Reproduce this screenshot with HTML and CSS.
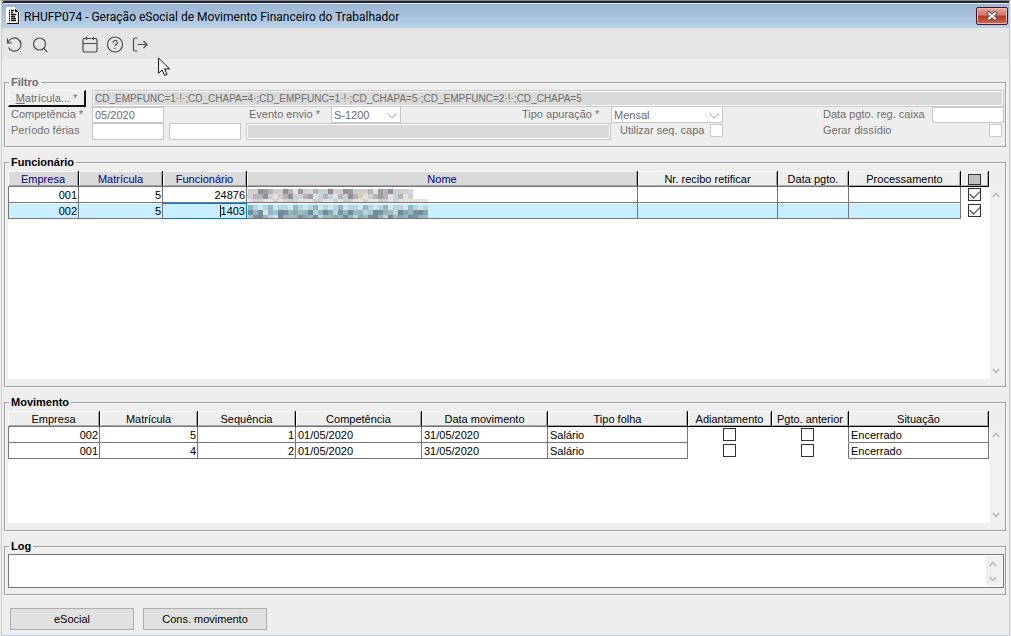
FILE: index.html
```html
<!DOCTYPE html>
<html lang="pt-BR">
<head>
    <meta charset="UTF-8">
    <meta name="viewport" content="width=device-width, initial-scale=1.0">
    <title>RHUFP074 - Geração eSocial de Movimento Financeiro do Trabalhador</title>
    <link rel="stylesheet" href="styles.css">
</head>
<body>
    <div class="window">
        <div class="titlebar">
            <svg class="doc-icon" width="14" height="17" viewBox="0 0 14 17">
                <path d="M1 1h8l4 4v11H1z" fill="#fff"/>
                <path d="M.5 .5h8.500M.5 .5v16M13 5v11.500M1 16.500h12.500" fill="none" stroke="#fff"/>
                <path d="M9 1v1h1v1h1v1h1v1h1v12H1v-1h11V5H9V1z" fill="#111"/>
                <path d="M3 3.500h1M5 3.500h3M3 5.500h1M5 5.500h2M3 7.500h1M5 7.500h5M3 9.500h1M5 9.500h4M3 11.500h1M5 11.500h5M3 13.500h1M5 13.500h5" stroke="#111" stroke-width="1.300"/>
            </svg>
            <h1>RHUFP074 - Geração eSocial de Movimento Financeiro do Trabalhador</h1>
            <button class="close-btn" aria-label="Fechar">
                <svg width="12" height="10" viewBox="0 0 12 10">
                    <path d="M3 2.500l6 5M9 2.500l-6 5" stroke="#4b4b55" stroke-width="4" stroke-linecap="square"/>
                    <path d="M3 2.500l6 5M9 2.500l-6 5" stroke="#f4f4f4" stroke-width="2.200" stroke-linecap="square"/>
                </svg>
            </button>
        </div>

        <div class="toolbar">
            <button class="tool" aria-label="Atualizar">
                <svg viewBox="0 0 18 18"><path d="M1.500 2.500v4.500h4.500M2 7a6.600 6.600 0 1 1 .5 4.500"/></svg>
            </button>
            <button class="tool" aria-label="Pesquisar">
                <svg viewBox="0 0 18 18"><circle cx="8.500" cy="8" r="6"/><path d="M12.800 12.300l3.400 3.700"/></svg>
            </button>
            <button class="tool tool-group" aria-label="Calendário">
                <svg viewBox="0 0 18 18"><rect x="2" y="2.500" width="14" height="13.500" rx="1.500"/><path d="M2 7.500h14M5.500 .8v3.200M12.500 .8v3.200"/></svg>
            </button>
            <button class="tool" aria-label="Ajuda">
                <svg viewBox="0 0 18 18"><circle cx="9" cy="8.500" r="7.500"/><path d="M6.900 6.700a2.200 2.200 0 1 1 3.300 1.900c-.8.500-1.200.8-1.200 1.500M9 11.800v1.200"/></svg>
            </button>
            <button class="tool" aria-label="Sair">
                <svg viewBox="0 0 18 18"><path d="M6.500 2h-2.500a1.500 1.500 0 0 0-1.500 1.500v10a1.500 1.500 0 0 0 1.500 1.500h2.500M6.500 8.500h9.500M12.500 5l3.500 3.500-3.500 3.500"/></svg>
            </button>
        </div>

        <svg class="cursor" width="13" height="20" viewBox="0 0 13 20">
            <path d="M.6 1v15.200l3.500-3.300 2.500 5.600 2.500-1.100-2.500-5.500h4.900z" fill="#fff" stroke="#111"/>
        </svg>

        <main class="content">
            <fieldset class="filter">
                <legend>Filtro</legend>
                <div class="filter-row">
                    <button class="lookup-btn"><u>M</u>atrícula... *</button>
                    <input type="text" class="readonly matricula" aria-label="Matrícula" value="CD_EMPFUNC=1·!·;CD_CHAPA=4·;CD_EMPFUNC=1·!·;CD_CHAPA=5·;CD_EMPFUNC=2·!·;CD_CHAPA=5" readonly>
                </div>
                <div class="filter-grid">
                    <label class="first" for="competencia">Competência *</label>
                    <input type="text" id="competencia" value="05/2020">
                    <label class="evento" for="evento">Evento envio *</label>
                    <div class="select-box">
                        <select id="evento"><option>S-1200</option></select>
                        <svg width="10" height="6" viewBox="0 0 10 6"><path d="M.5 .5l4.500 4.500 4.500-4.500"/></svg>
                    </div>
                    <label class="tipo" for="tipo">Tipo apuração *</label>
                    <div class="select-box">
                        <select id="tipo"><option>Mensal</option></select>
                        <svg width="10" height="6" viewBox="0 0 10 6"><path d="M.5 .5l4.500 4.500 4.500-4.500"/></svg>
                    </div>
                    <label class="pgto" for="pgto">Data pgto. reg. caixa</label>
                    <input type="text" id="pgto">
                </div>
                <div class="filter-grid last">
                    <label class="first" for="ferias">Período férias</label>
                    <input type="text" id="ferias">
                    <div class="ferias-extra">
                        <input type="text" class="ferias-fim" aria-label="Período férias fim">
                        <input type="text" class="readonly" aria-label="Descrição do período" readonly>
                    </div>
                    <div class="capa">
                        <label for="capa">Utilizar seq. capa</label>
                        <input type="checkbox" id="capa">
                    </div>
                    <label class="pgto" for="dissidio">Gerar dissídio</label>
                    <input type="checkbox" id="dissidio" class="dissidio">
                </div>
            </fieldset>

            <fieldset>
                <legend>Funcionário</legend>
                <div class="grid-box grid-func">
                    <div class="grid-area">
                        <table>
                            <thead>
                                <tr>
                                    <th class="key w71">Empresa</th>
                                    <th class="key w84">Matrícula</th>
                                    <th class="key w84">Funcionário</th>
                                    <th class="key">Nome</th>
                                    <th class="w140">Nr. recibo retificar</th>
                                    <th class="w71">Data pgto.</th>
                                    <th class="dark w112">Processamento</th>
                                    <th class="dark w28"><input type="checkbox" class="check-all" aria-label="Marcar todos"></th>
                                </tr>
                            </thead>
                            <tbody>
                                <tr>
                                    <td class="num">001</td>
                                    <td class="num">5</td>
                                    <td class="num">24876</td>
                                    <td class="masked"><svg class="mosaic" data-row="0"></svg></td>
                                    <td></td>
                                    <td></td>
                                    <td></td>
                                    <td class="check"><input type="checkbox" aria-label="Selecionar 24876" checked></td>
                                </tr>
                                <tr class="selected">
                                    <td class="num">002</td>
                                    <td class="num">5</td>
                                    <td class="num focus"><span class="caret">1403</span></td>
                                    <td class="masked"><svg class="mosaic" data-row="1"></svg></td>
                                    <td></td>
                                    <td></td>
                                    <td></td>
                                    <td class="check"><input type="checkbox" aria-label="Selecionar 1403" checked></td>
                                </tr>
                            </tbody>
                        </table>
                    </div>
                    <div class="scrollbar">
                        <button aria-label="Subir"><svg viewBox="0 0 8 6"><path d="M.8 5l3.200-3.500 3.200 3.500"/></svg></button>
                        <button aria-label="Descer"><svg viewBox="0 0 8 6"><path d="M.8 1l3.200 3.500 3.200-3.500"/></svg></button>
                    </div>
                </div>
            </fieldset>

            <fieldset>
                <legend>Movimento</legend>
                <div class="grid-box grid-mov">
                    <div class="grid-area">
                        <table>
                            <thead>
                                <tr>
                                    <th class="w92">Empresa</th>
                                    <th class="w98">Matrícula</th>
                                    <th class="w98">Sequência</th>
                                    <th class="w126">Competência</th>
                                    <th class="w126">Data movimento</th>
                                    <th class="dark">Tipo folha</th>
                                    <th class="dark w84">Adiantamento</th>
                                    <th class="dark w77">Pgto. anterior</th>
                                    <th class="dark w140">Situação</th>
                                </tr>
                            </thead>
                            <tbody>
                                <tr>
                                    <td class="num">002</td>
                                    <td class="num">5</td>
                                    <td class="num">1</td>
                                    <td>01/05/2020</td>
                                    <td>31/05/2020</td>
                                    <td>Salário</td>
                                    <td class="check"><input type="checkbox" aria-label="Adiantamento 002"></td>
                                    <td class="check before-cell"><input type="checkbox" aria-label="Pgto. anterior 002"></td>
                                    <td>Encerrado</td>
                                </tr>
                                <tr>
                                    <td class="num">001</td>
                                    <td class="num">4</td>
                                    <td class="num">2</td>
                                    <td>01/05/2020</td>
                                    <td>31/05/2020</td>
                                    <td>Salário</td>
                                    <td class="check"><input type="checkbox" aria-label="Adiantamento 001"></td>
                                    <td class="check before-cell"><input type="checkbox" aria-label="Pgto. anterior 001"></td>
                                    <td>Encerrado</td>
                                </tr>
                            </tbody>
                        </table>
                    </div>
                    <div class="scrollbar">
                        <button aria-label="Subir"><svg viewBox="0 0 8 6"><path d="M.8 5l3.200-3.500 3.200 3.500"/></svg></button>
                        <button aria-label="Descer"><svg viewBox="0 0 8 6"><path d="M.8 1l3.200 3.500 3.200-3.500"/></svg></button>
                    </div>
                </div>
            </fieldset>

            <fieldset class="log">
                <legend>Log</legend>
                <div class="log-box">
                    <textarea aria-label="Log"></textarea>
                    <div class="scrollbar">
                        <button aria-label="Subir"><svg viewBox="0 0 8 6"><path d="M.8 5l3.200-3.500 3.200 3.500"/></svg></button>
                        <button aria-label="Descer"><svg viewBox="0 0 8 6"><path d="M.8 1l3.200 3.500 3.200-3.500"/></svg></button>
                    </div>
                </div>
            </fieldset>

            <div class="actions">
                <button class="button">eSocial</button>
                <button class="button">Cons. movimento</button>
            </div>
        </main>
    </div>

    <script src="script.js"></script>
</body>
</html>
```
FILE: styles.css
```css
* {
    box-sizing: border-box;
}
body {
    margin: 0;
    background-color: #eee;
    font-family: "Liberation Sans", Arial, sans-serif;
    font-size: 11px;
    line-height: 14px;
    color: #000;
}
button, input, select, textarea {
    font: inherit;
    color: inherit;
    margin: 0;
    border-radius: 0;
}
.window {
    position: relative;
    min-height: 100vh;
    margin: 0 1px;
    border: 1px solid #b9cde2;
    border-top: 1px solid #85858f;
    background-color: #eee;
}
.titlebar {
    display: flex;
    align-items: center;
    height: 27px;
    padding: 0 1px 0 4px;
    border-top: 2px solid #22262e;
    border-radius: 3px 0 0 0;
    box-shadow: inset 0 1px 0 #e6f0fa;
    background: linear-gradient(#99b4d1, #b9d1ea);
}
.titlebar h1 {
    flex: 1;
    margin: 0 0 0 4px;
    padding-top: 2px;
    font-family: Roboto, "Open Sans", sans-serif;
    font-size: 12px;
    font-weight: normal;
    line-height: 16px;
}
.close-btn {
    display: flex;
    align-items: center;
    justify-content: center;
    width: 32px;
    height: 18px;
    padding: 0;
    border: 1px solid #4a1222;
    border-radius: 2px;
    box-shadow: inset 0 0 0 1px #eab9b0;
    background: linear-gradient(#e6a79c, #d3776a 45%, #b03a22 50%, #d06a50);
}

/* toolbar */
.toolbar {
    display: flex;
    height: 31px;
    padding-top: 3px;
    background-color: #e5e5e5;
}
.tool {
    display: flex;
    align-items: center;
    justify-content: center;
    width: 25px;
    height: 28px;
    padding: 0;
    border: none;
    background: none;
}
.tool-group {
    margin-left: 25px;
}
.tool svg {
    width: 18px;
    height: 18px;
    fill: none;
    stroke: #4a4a4a;
    stroke-width: 1.2;
}
.cursor {
    position: absolute;
    top: 56px;
    left: 156px;
    z-index: 2;
}

/* group boxes */
.content {
    padding: 16px 3px 5px 2px;
}
fieldset {
    min-width: 0;
    margin: 0 0 8px;
    padding: 2px 1px 7px 3px;
    border: 1px solid #9d9d9d;
    box-shadow: 1px 1px 0 #fff, inset 1px 1px 0 #fff;
}
legend {
    margin-left: 1px;
    padding: 0 2px;
    background-color: #eee;
    font-weight: bold;
}

/* filter */
.filter {
    padding: 1px 1px 6px 3px;
    color: #6d6d6d;
}
.filter-row {
    display: flex;
    gap: 6px;
    height: 17px;
}
.lookup-btn {
    width: 78px;
    padding: 0;
    border: 1px solid #fff;
    border-right: 2px solid #111;
    border-bottom: 2px solid #111;
    background-color: #eee;
    line-height: 12px;
}
.filter-row .readonly {
    flex: 1;
}
.filter input[type="text"] {
    min-width: 0;
    padding: 0 2px;
    border: 1px solid #c8c8c8;
    background-color: #fff;
}
.filter input.readonly {
    background-color: #dadada;
    box-shadow: inset 0 0 0 1px #fff;
}
.matricula {
    font-size: 10px;
}
.filter-grid {
    display: grid;
    grid-template-columns: 84px 72px 85px 82px 70px 1fr 89px 112px 100px 109px 72px;
    height: 16px;
}
.filter-grid.last {
    height: 17px;
}
.first {
    padding-left: 3px;
}
.evento {
    grid-column: 4;
}
.tipo {
    grid-column: 7;
}
.pgto {
    grid-column: 10;
}
.select-box {
    display: grid;
    align-items: center;
    border: 1px solid #c8c8c8;
    border-top: none;
    background-color: #fff;
}
.select-box select {
    grid-area: 1 / 1;
    appearance: none;
    padding: 0 2px;
    border: none;
    background: none;
}
.select-box svg {
    grid-area: 1 / 1;
    justify-self: end;
    margin: 2px 3px 0 0;
    fill: none;
    stroke: #aaa;
    pointer-events: none;
}
.ferias-extra {
    grid-column: 3 / 8;
    display: flex;
    gap: 5px;
    padding-left: 5px;
}
.ferias-fim {
    width: 72px;
}
.ferias-extra .readonly {
    flex: 1;
}
.capa {
    display: flex;
    justify-content: space-between;
    padding-left: 9px;
}
.dissidio {
    justify-self: end;
}
input[type="checkbox"] {
    display: block;
    appearance: none;
    width: 13px;
    height: 13px;
    border: 1px solid #333;
    background-color: #fff;
}
.filter input[type="checkbox"] {
    margin-top: 1px;
    border-color: #c8c8c8;
}
.filter input.dissidio {
    margin-right: 2px;
}
input[type="checkbox"]:checked::after {
    content: "";
    display: block;
    width: 9px;
    height: 5px;
    margin: 1px;
    border: solid #333;
    border-width: 0 0 1px 1px;
    transform: rotate(-45deg);
}

/* data grids */
.grid-box {
    display: flex;
}
.grid-func {
    height: 208px;
}
.grid-mov {
    height: 112px;
}
.grid-area {
    flex: 1;
    padding-right: 1px;
    background-color: #fff;
}
table {
    width: 100%;
    table-layout: fixed;
    border-collapse: separate;
    border-spacing: 0;
}
th, td {
    height: 16px;
    padding: 2px 2px 0;
    border-right: 1px solid #767676;
    border-bottom: 1px solid #767676;
    line-height: 13px;
    text-align: left;
    white-space: nowrap;
}
th {
    padding: 2px 0 0;
    border-right-color: #000;
    background-color: #eee;
    box-shadow: inset 1px 1px 0 #fff, inset -1px -1px 0 #a6a6a6;
    font-weight: normal;
    text-align: center;
}
th.key {
    background-color: #dadada;
    color: #000080;
}
th.dark {
    border-bottom-color: #000;
}
td:first-child {
    border-left: 1px solid #767676;
}
td.num {
    padding: 2px 1px 0;
    text-align: right;
}
.selected td {
    background-color: #c9eeff;
    box-shadow: inset 0 1px 0 #fff;
}
.selected td.focus {
    border-color: #0078d7;
    box-shadow: inset 0 1px 0 #0078d7;
}
.caret {
    border-left: 1px solid #000;
}
td.check, .selected td.check {
    padding: 1px 0 0;
    border-color: transparent;
    background-color: #fff;
    box-shadow: none;
    vertical-align: top;
}
td.before-cell {
    padding-right: 5px;
    border-right-color: #767676;
}
.check input, .check-all {
    margin: 0 auto;
}
.check-all[type="checkbox"] {
    width: 13px;
    height: 11px;
    background-color: #c0c0c0;
}
td.masked {
    padding: 2px 1px 0;
}
.mosaic {
    display: block;
    width: 100%;
    height: 13px;
}
.w28 { width: 28px; }
.w71 { width: 71px; }
.w77 { width: 77px; }
.w84 { width: 84px; }
.w92 { width: 92px; }
.w98 { width: 98px; }
.w112 { width: 112px; }
.w126 { width: 126px; }
.w140 { width: 140px; }

.scrollbar {
    display: flex;
    flex-direction: column;
    justify-content: space-between;
    width: 14px;
    margin-top: 16px;
    background-color: #f0f0f0;
}
.scrollbar button {
    display: flex;
    align-items: center;
    justify-content: center;
    height: 16px;
    padding: 0 3px 0 0;
    border: none;
    background: none;
}
.scrollbar svg {
    width: 8px;
    height: 6px;
    fill: none;
    stroke: #bdbdbd;
    stroke-width: 1.8;
}

/* log */
.log {
    margin-bottom: 13px;
    padding: 1px 1px 6px 3px;
}
.log-box {
    display: flex;
    height: 34px;
    padding: 1px;
    border: 1px solid #767676;
    background-color: #fff;
}
.log-box textarea {
    flex: 1;
    padding: 0;
    border: none;
    resize: none;
    outline: none;
}
.log-box .scrollbar {
    width: 16px;
    margin: 0;
}
.log-box .scrollbar button {
    height: 15px;
}

.actions {
    display: flex;
    gap: 9px;
    padding-left: 6px;
}
.button {
    width: 124px;
    height: 22px;
    padding: 0;
    border: 1px solid #adadad;
    background-color: #e1e1e1;
}
```
FILE: script.js
```js
// Masked names: one character per 5px block, looked up in the row's palette
const palettes = [
    { a: '#8f8f99', b: '#b4b4b8', c: '#cfcfd2', d: '#e3e3e3', e: '#d8cdbb', f: '#c3d0d6', g: '#a39b9b', h: '#d0d6ea' },
    { a: '#6f8b9b', b: '#94b5c2', c: '#b9d4de', d: '#cfe6ee', e: '#9fb9b5', f: '#86a9ae', g: '#7c8f9f', h: '#a5c4d3' }
];
const names = [
    ['ecagbfcabdgchbfcaecagfcebdgbafceh', 'cbbacdebafcbgdcbfdbcabedcbgbdcbdc', 'dccddcdcccdddccddcdccddcddccdcdddddd'],
    ['bcdcbdccdbcdcbdcdcbdccdbcdcbdccdbcdc', 'abgdbhagbfebacbafcgbaebchagbecafbgaf', 'hgabcdabebgfbacbefbabcfegabcaefbagbe']
];
const bands = [[0, 5], [5, 5], [10, 3]];

document.querySelectorAll('.mosaic').forEach(svg => {
    const row = Number(svg.dataset.row);
    names[row].forEach((line, i) => {
        [...line].forEach((key, x) => {
            const rect = document.createElementNS('http://www.w3.org/2000/svg', 'rect');
            rect.setAttribute('x', x * 5);
            rect.setAttribute('y', bands[i][0]);
            rect.setAttribute('width', 5);
            rect.setAttribute('height', bands[i][1]);
            rect.setAttribute('fill', palettes[row][key]);
            svg.appendChild(rect);
        });
    });
});
```
